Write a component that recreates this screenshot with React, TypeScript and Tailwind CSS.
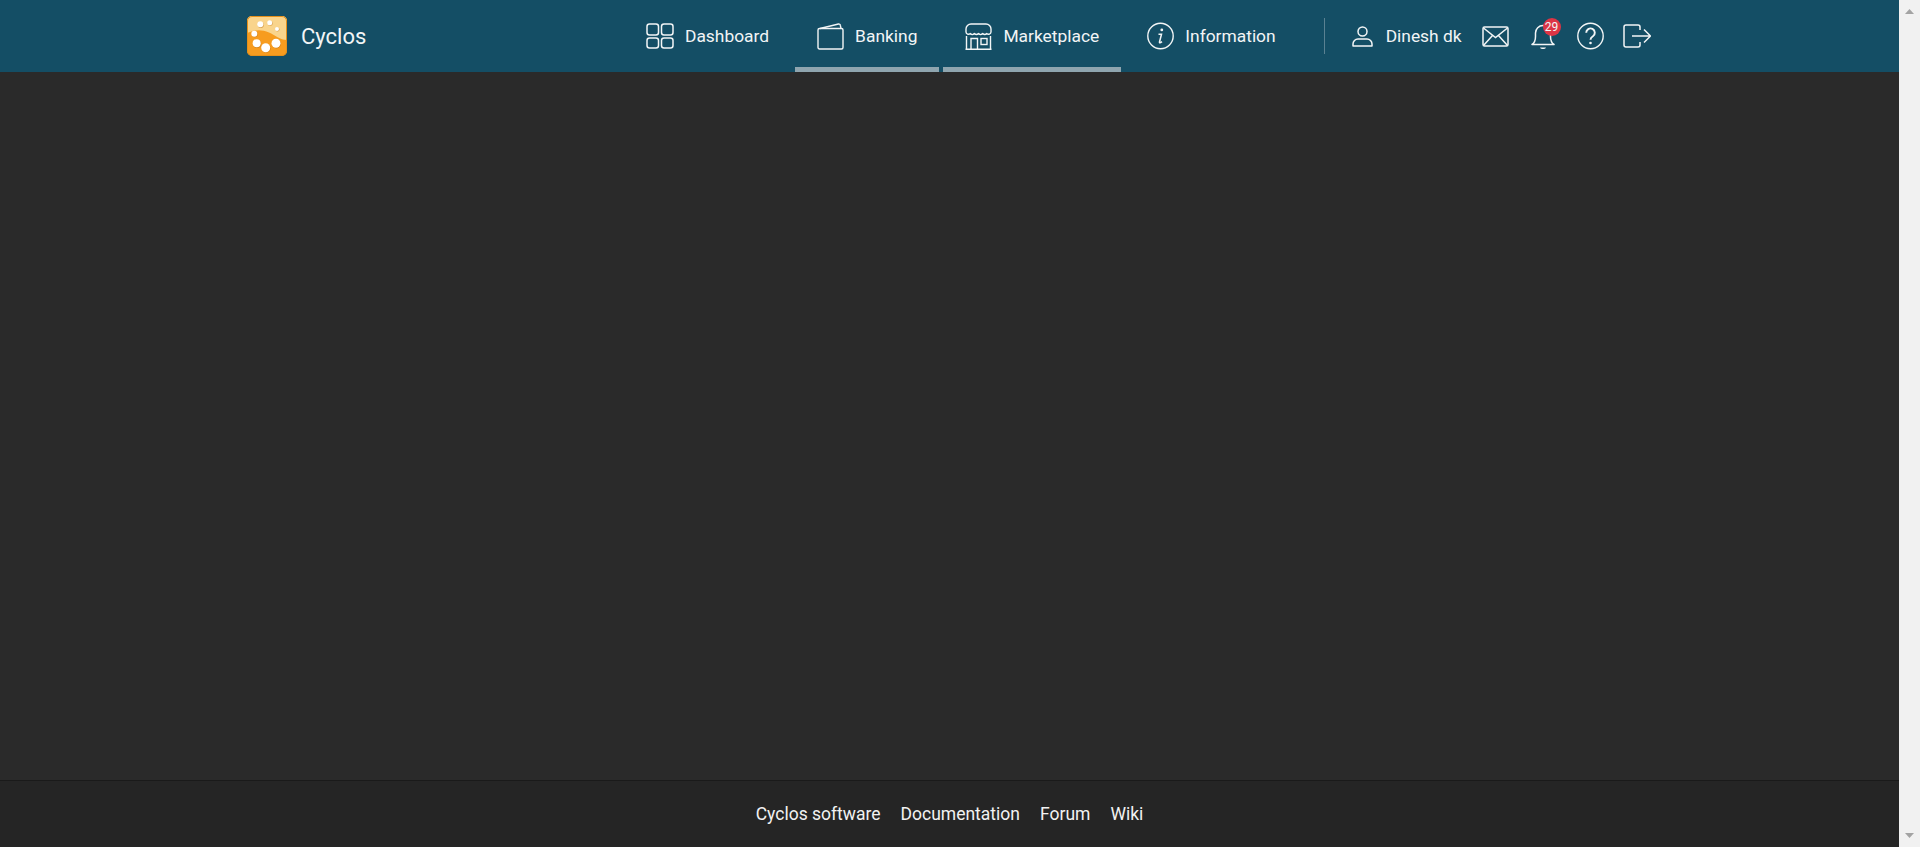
const font = { fontFamily: 'Roboto, sans-serif' };

const DashboardIcon = () => (
  <svg width="28" height="26" viewBox="0 0 28 26" fill="none" stroke="currentColor" strokeWidth="1.5">
    <rect x="1" y="1" width="11.5" height="11" rx="2.5" />
    <rect x="15.5" y="1" width="11.5" height="11" rx="2.5" />
    <rect x="1" y="15" width="11.5" height="10" rx="2.5" />
    <rect x="15.5" y="15" width="11.5" height="10" rx="2.5" />
  </svg>
);

const WalletIcon = () => (
  <svg width="27" height="27" viewBox="0 0 27 27" fill="none" stroke="currentColor" strokeWidth="1.4">
    <path d="M2.500 5.500h22a1.500 1.500 0 0 1 1.500 1.500v17.500a1.500 1.500 0 0 1-1.500 1.500h-22A1.500 1.500 0 0 1 1 24.500V7a1.500 1.500 0 0 1 1.500-1.500z" />
    <path d="M3 5.500 L21.500 1 a1.500 1.500 0 0 1 1.800 1.200 L24 5.500" />
  </svg>
);

const StoreIcon = () => (
  <svg width="27" height="27" viewBox="0 0 27 27" fill="none" stroke="currentColor" strokeWidth="1.4">
    <path d="M6 1h15a5 5 0 0 1 5 5v3a2.500 2.500 0 0 1-4.200 1.600 a3 3 0 0 1-4.100 0 a3 3 0 0 1-4.200 0 a3 3 0 0 1-4.100 0 a3 3 0 0 1-4.200 0 A2.500 2.500 0 0 1 1 9V6a5 5 0 0 1 5-5z" />
    <path d="M1.500 13v13M25.500 13v13M.5 26.200h26" />
    <path d="M6 26V15.500h6.500V26" />
    <rect x="16" y="15.500" width="6" height="6" />
  </svg>
);

const InfoIcon = () => (
  <svg width="27" height="28" viewBox="0 0 27 28" fill="none" stroke="currentColor">
    <circle cx="13.500" cy="14" r="12.700" strokeWidth="1.400" />
    <circle cx="14.800" cy="7.900" r="1.400" fill="currentColor" stroke="none" />
    <path d="M11.500 12.200h3l-2 7.800c-.2 1 .5 1.300 2.500-.3" strokeWidth="1.500" />
  </svg>
);

const UserIcon = () => (
  <svg width="21" height="21" viewBox="0 0 21 21" fill="none" stroke="currentColor" strokeWidth="1.500">
    <circle cx="10.500" cy="5.500" r="4.500" />
    <path d="M1 20v-2a5 5 0 0 1 5-5h9a5 5 0 0 1 5 5v2z" strokeLinejoin="round" />
  </svg>
);

const MailIcon = () => (
  <svg width="27" height="21" viewBox="0 0 27 21" fill="none" stroke="currentColor" strokeWidth="1.500">
    <rect x="1" y="1" width="25" height="19" rx="1.500" />
    <path d="M1.500 2 L13.500 11.500 L25.500 2M1.500 19.500 L10.500 9.500M25.500 19.500 L16.500 9.500" />
  </svg>
);

const BellIcon = () => (
  <svg width="24" height="27" viewBox="0 0 24 27" fill="none" stroke="currentColor" strokeWidth="1.500">
    <path d="M1 21.500c2.500-1.500 3.500-4 3.500-8V10a7.500 7.500 0 0 1 15 0v3.500c0 4 1 6.500 3.500 8z" strokeLinejoin="round" />
    <path d="M9 24.500h6c-.8 2-5.200 2-6 0z" fill="currentColor" stroke="none" />
  </svg>
);

const HelpIcon = () => (
  <svg width="27" height="28" viewBox="0 0 27 28" fill="none" stroke="currentColor">
    <circle cx="13.500" cy="14" r="12.700" strokeWidth="1.400" />
    <path d="M9.200 10.800a4.300 4.300 0 1 1 6.700 3.500c-1.600 1-2.400 1.700-2.400 3.500" strokeWidth="1.900" />
    <circle cx="13.500" cy="21" r="1.300" fill="currentColor" stroke="none" />
  </svg>
);

const LogoutIcon = () => (
  <svg width="28" height="24" viewBox="0 0 28 24" fill="none" stroke="currentColor" strokeWidth="1.500">
    <path d="M17 6V3a2 2 0 0 0-2-2H3a2 2 0 0 0-2 2v18a2 2 0 0 0 2 2h12a2 2 0 0 0 2-2v-3" />
    <path d="M9 12h18M21 5.500l6.500 6.500-6.500 6.500" />
  </svg>
);

const dots = [
  [13.3, 8.3, 3],
  [22.7, 6.7, 2.5],
  [30, 13, 2],
  [7.3, 17.7, 3],
  [9.7, 27.3, 4],
  [18.7, 31.7, 4.5],
  [29, 27.3, 4.5],
];

const Logo = () => (
  <svg width="40" height="40" viewBox="0 0 40 40">
    <rect x="0" y="0" width="40" height="40" rx="5" fill="#f79c1f" />
    <path d="M0 17V5a5 5 0 0 1 5-5h30a5 5 0 0 1 5 5v19C33 24 28 19 22 16.500 14 13 7 14 0 17z" fill="#f9d48c" />
    <rect x=".5" y=".5" width="39" height="39" rx="4.500" fill="none" stroke="#e5901a" />
    {dots.map(([cx, cy, r]) => (
      <g key={cx}>
        <circle cx={cx + 0.5} cy={cy + 0.6} r={r} fill="#b5690f" opacity="0.5" />
        <circle cx={cx} cy={cy} r={r} fill="#fff" />
      </g>
    ))}
  </svg>
);

const NavItem = ({ icon: Icon, label, active }: { icon: React.ElementType, label: string, active?: boolean }) => (
  <a className={`flex h-[72px] items-center gap-[11px] border-b-[5px] px-[22px] pt-[5px] ${active ? 'border-[#8fa5af]' : 'border-transparent'}`}>
    <Icon />
    <span className="text-[17.4px] leading-[25px]">{label}</span>
  </a>
);

export default function App() {
  return (
    <div className="flex h-screen overflow-hidden whitespace-nowrap text-white" style={font}>
      <div className="flex min-w-0 flex-1 flex-col bg-[#2a2a2a]">
        <header className="h-[72px] shrink-0 bg-[#144e65]">
          <div className="mx-auto flex h-full w-[1405px] items-center text-[#f2f5f6]">
            <div className="flex w-[377px] shrink-0 items-center gap-[14px]">
              <Logo />
              <span className="text-[22px]">Cyclos</span>
            </div>
            <nav className="flex shrink-0 gap-1">
              <NavItem icon={DashboardIcon} label="Dashboard" />
              <NavItem icon={WalletIcon} label="Banking" active />
              <NavItem icon={StoreIcon} label="Marketplace" active />
              <NavItem icon={InfoIcon} label="Information" />
            </nav>
            <div className="ml-[26px] h-9 w-px shrink-0 bg-[#5a8192]" />
            <div className="ml-[27px] flex items-center">
              <UserIcon />
              <span className="ml-[13px] text-[17.4px] leading-[25px]">Dinesh dk</span>
              <span className="ml-5"><MailIcon /></span>
              <span className="relative ml-[22px] flex">
                <BellIcon />
                <span className="absolute -top-[5px] left-3 flex h-[18px] w-[18px] items-center justify-center rounded-full bg-[#dc3545] text-[12px]">29</span>
              </span>
              <span className="ml-[22px]"><HelpIcon /></span>
              <span className="ml-[19px]"><LogoutIcon /></span>
            </div>
          </div>
        </header>
        <main className="flex-1" />
        <footer className="flex h-[67px] shrink-0 items-center justify-center gap-5 border-t border-[#1a1a1a] bg-[#252525] text-[17.5px] text-[#f2f2f2]">
          <a>Cyclos software</a>
          <a>Documentation</a>
          <a>Forum</a>
          <a>Wiki</a>
        </footer>
      </div>
      <div className="flex w-[21px] shrink-0 flex-col items-center justify-between bg-[#f1f1f1] py-[9px]">
        <svg width="9" height="5" viewBox="0 0 9 5"><path d="M4.500 0L9 5H0z" fill="#a3a3a3" /></svg>
        <svg width="9" height="5" viewBox="0 0 9 5"><path d="M4.500 5L9 0H0z" fill="#a3a3a3" /></svg>
      </div>
    </div>
  );
}
